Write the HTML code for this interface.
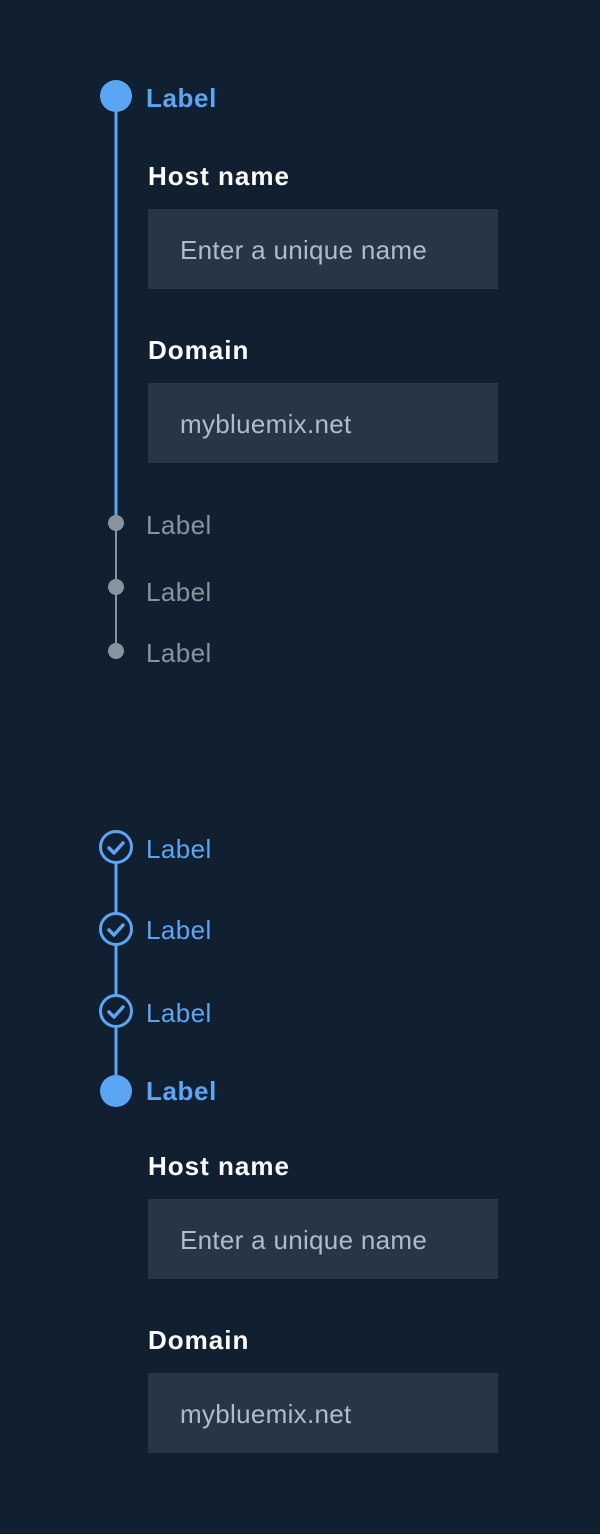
<!DOCTYPE html>
<html><head><style>
html,body{margin:0;padding:0;}
body{width:600px;height:1534px;background:#112030;position:relative;overflow:hidden;font-family:"Liberation Sans",Arial,sans-serif;}
.a{position:absolute;}
.lbl{position:absolute;left:146px;font-size:26px;line-height:30px;letter-spacing:0.4px;}
.blue{color:#5aa6f5;}
.gray{color:#8a939c;}
.b{font-weight:bold;letter-spacing:0.6px;}
.h{position:absolute;left:148px;font-size:26px;font-weight:bold;color:#fff;line-height:30px;letter-spacing:1px;}
.in{position:absolute;left:148px;width:350px;height:80px;background:#263645;color:#aebccb;font-size:26px;line-height:82px;box-sizing:border-box;padding-left:32px;letter-spacing:0.3px;}
</style></head><body>
<svg class="a" style="left:0;top:0" width="600" height="1534">
<line x1="116" y1="96" x2="116" y2="516" stroke="#5aa6f5" stroke-width="3"/>
<line x1="116" y1="523" x2="116" y2="651" stroke="#8a939c" stroke-width="2"/>
<circle cx="116" cy="96" r="16" fill="#5aa6f5"/>
<circle cx="116" cy="523" r="8" fill="#8a939c"/>
<circle cx="116" cy="587" r="8" fill="#8a939c"/>
<circle cx="116" cy="651" r="8" fill="#8a939c"/>
<line x1="116" y1="863" x2="116" y2="1091" stroke="#5aa6f5" stroke-width="3"/>
<g fill="#112030" stroke="#5aa6f5" stroke-width="3">
<circle cx="116" cy="847" r="15.5"/>
<circle cx="116" cy="929" r="15.5"/>
<circle cx="116" cy="1011" r="15.5"/>
</g>
<g fill="none" stroke="#5aa6f5" stroke-width="3.5" stroke-linecap="round" stroke-linejoin="round">
<path d="M109 848 l5 5 l9 -10"/>
<path d="M109 930 l5 5 l9 -10"/>
<path d="M109 1012 l5 5 l9 -10"/>
</g>
<circle cx="116" cy="1091" r="16" fill="#5aa6f5"/>
</svg>
<div class="lbl blue b" style="top:83px">Label</div>
<div class="h" style="top:161px">Host name</div>
<div class="in" style="top:209px">Enter a unique name</div>
<div class="h" style="top:335px">Domain</div>
<div class="in" style="top:383px">mybluemix.net</div>
<div class="lbl gray" style="top:510px">Label</div>
<div class="lbl gray" style="top:577px">Label</div>
<div class="lbl gray" style="top:638px">Label</div>
<div class="lbl blue" style="top:834px">Label</div>
<div class="lbl blue" style="top:915px">Label</div>
<div class="lbl blue" style="top:998px">Label</div>
<div class="lbl blue b" style="top:1076px">Label</div>
<div class="h" style="top:1151px">Host name</div>
<div class="in" style="top:1199px">Enter a unique name</div>
<div class="h" style="top:1325px">Domain</div>
<div class="in" style="top:1373px">mybluemix.net</div>
</body></html>
